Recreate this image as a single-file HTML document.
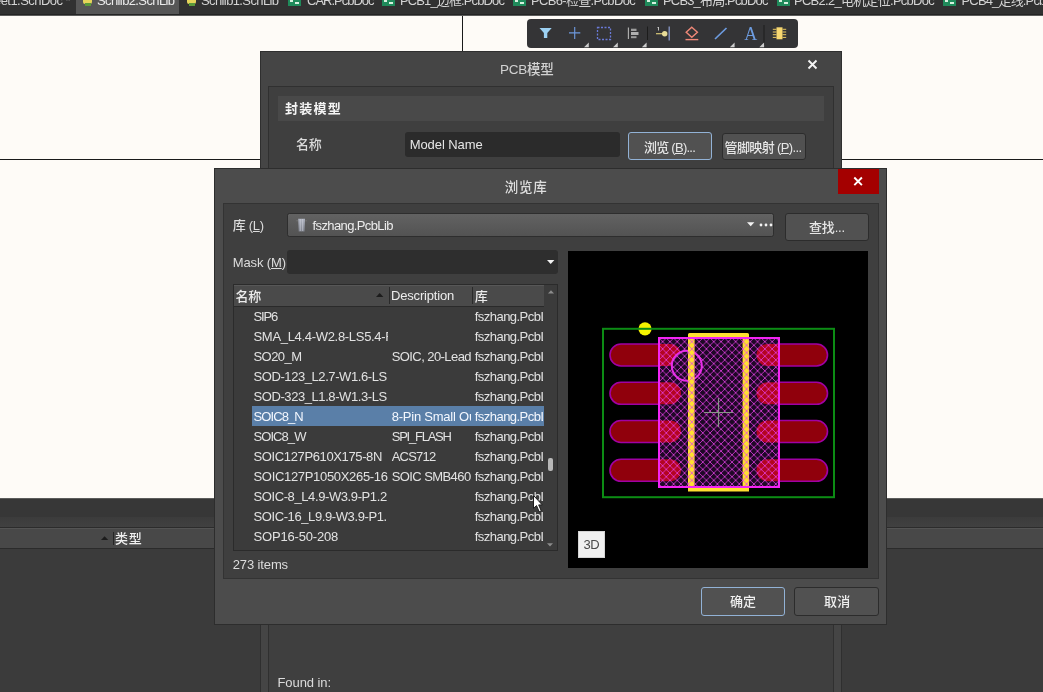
<!DOCTYPE html>
<html><head><meta charset="utf-8">
<style>
*{box-sizing:border-box;margin:0;padding:0}
html,body{width:1043px;height:692px;overflow:hidden;background:#fefbf7}
body{position:relative;font-family:"Liberation Sans","Noto Sans CJK SC",sans-serif;font-size:13px;color:#e0e0e0}
.a{position:absolute}
.t{position:absolute;white-space:nowrap}
.clip{position:absolute;overflow:hidden}
.btn{position:absolute;background:#515151;border:1px solid #2c2c2c;border-radius:3px}
#all{position:absolute;left:0;top:0;width:1043px;height:692px;will-change:transform}
</style></head><body><div id="all">

<div class="a" style="left:462px;top:15px;width:1px;height:37px;background:#1a1a1a"></div>
<div class="a" style="left:0;top:159px;width:260px;height:1px;background:#1a1a1a"></div>
<div class="a" style="left:842px;top:159px;width:201px;height:1px;background:#1a1a1a"></div>

<div class="clip" style="left:0;top:0;width:1043px;height:16px;background:#313131;border-bottom:1px solid #5c5c5b">
<div class="a" style="left:76px;top:0;width:103px;height:14px;background:#565656"></div>
<div class="a" style="left:0;top:14px;width:1043px;height:1px;background:#242424"></div>
<span class="t" style="left:-6px;top:-8.0px;font-size:13px;line-height:17px;color:#d4d4d4;letter-spacing:-0.55px;">eet1.SchDoc *</span>
<svg class="a" style="left:82px;top:-4.500px" width="12" height="12"><rect x="1" y="0" width="9" height="8" rx="2" fill="#e6d45a"/><rect x="3" y="7" width="6" height="3" fill="#5a9a3a"/></svg>
<span class="t" style="left:97px;top:-8.0px;font-size:13px;line-height:17px;color:#ececec;letter-spacing:-0.61px;">Schlib2.SchLib</span>
<svg class="a" style="left:186px;top:-4.500px" width="12" height="12"><rect x="1" y="0" width="9" height="8" rx="2" fill="#e6d45a"/><rect x="3" y="7" width="6" height="3" fill="#5a9a3a"/></svg>
<span class="t" style="left:201px;top:-8.0px;font-size:13px;line-height:17px;color:#d4d4d4;letter-spacing:-0.61px;">Schlib1.SchLib</span>
<svg class="a" style="left:288px;top:-4.500px" width="14" height="12"><rect x="0" y="0" width="13" height="10" fill="#1f8a5a"/><rect x="2" y="3" width="3" height="3" fill="#d8f0e0"/><rect x="7" y="2" width="4" height="2" fill="#d8f0e0"/><rect x="7" y="6" width="4" height="2" fill="#d8f0e0"/></svg>
<span class="t" style="left:307px;top:-8.0px;font-size:13px;line-height:17px;color:#d4d4d4;letter-spacing:-1.01px;">CAR.PcbDoc</span>
<svg class="a" style="left:382px;top:-4.500px" width="14" height="12"><rect x="0" y="0" width="13" height="10" fill="#1f8a5a"/><rect x="2" y="3" width="3" height="3" fill="#d8f0e0"/><rect x="7" y="2" width="4" height="2" fill="#d8f0e0"/><rect x="7" y="6" width="4" height="2" fill="#d8f0e0"/></svg>
<span class="t" style="left:400px;top:-8.0px;font-size:13px;line-height:17px;color:#d4d4d4;letter-spacing:-0.88px;">PCB1_边框.PcbDoc</span>
<svg class="a" style="left:513px;top:-4.500px" width="14" height="12"><rect x="0" y="0" width="13" height="10" fill="#1f8a5a"/><rect x="2" y="3" width="3" height="3" fill="#d8f0e0"/><rect x="7" y="2" width="4" height="2" fill="#d8f0e0"/><rect x="7" y="6" width="4" height="2" fill="#d8f0e0"/></svg>
<span class="t" style="left:531px;top:-8.0px;font-size:13px;line-height:17px;color:#d4d4d4;letter-spacing:-0.67px;">PCB6-检查.PcbDoc</span>
<svg class="a" style="left:645px;top:-4.500px" width="14" height="12"><rect x="0" y="0" width="13" height="10" fill="#1f8a5a"/><rect x="2" y="3" width="3" height="3" fill="#d8f0e0"/><rect x="7" y="2" width="4" height="2" fill="#d8f0e0"/><rect x="7" y="6" width="4" height="2" fill="#d8f0e0"/></svg>
<span class="t" style="left:663px;top:-8.0px;font-size:13px;line-height:17px;color:#d4d4d4;letter-spacing:-0.84px;">PCB3_布局.PcbDoc</span>
<svg class="a" style="left:777px;top:-4.500px" width="14" height="12"><rect x="0" y="0" width="13" height="10" fill="#1f8a5a"/><rect x="2" y="3" width="3" height="3" fill="#d8f0e0"/><rect x="7" y="2" width="4" height="2" fill="#d8f0e0"/><rect x="7" y="6" width="4" height="2" fill="#d8f0e0"/></svg>
<span class="t" style="left:794px;top:-8.0px;font-size:13px;line-height:17px;color:#d4d4d4;letter-spacing:-0.73px;">PCB2.2_电机定位.PcbDoc</span>
<svg class="a" style="left:943px;top:-4.500px" width="14" height="12"><rect x="0" y="0" width="13" height="10" fill="#1f8a5a"/><rect x="2" y="3" width="3" height="3" fill="#d8f0e0"/><rect x="7" y="2" width="4" height="2" fill="#d8f0e0"/><rect x="7" y="6" width="4" height="2" fill="#d8f0e0"/></svg>
<span class="t" style="left:961.5px;top:-8.0px;font-size:13px;line-height:17px;color:#d4d4d4;letter-spacing:-0.84px;">PCB4_走线.PcbDoc</span>
</div>
<div class="a" style="left:527px;top:19px;width:271px;height:29px;background:#343436;border-radius:4px"></div>
<svg class="a" style="left:527px;top:19px" width="271" height="29" viewBox="0 0 271 29">
 <path d="M12.500 9 H24.700 L20.300 14 V19 H16.900 V14 Z" fill="#9cd0f2"/>
 <path d="M47.700 8 V20 M42 13.900 H53.300" stroke="#6d98dc" stroke-width="1.150" fill="none"/>
 <rect x="70.500" y="8.500" width="13" height="12" fill="none" stroke="#6a7ad8" stroke-width="1.300" stroke-dasharray="2 1.500"/>
 <path d="M101.400 8.500 V20" stroke="#b4b4b4" stroke-width="1.100"/><rect x="104" y="9.700" width="5.500" height="2.300" fill="#9c9c9c"/><rect x="104" y="13" width="7.500" height="3" fill="#b0b0b0"/><rect x="104" y="17.200" width="5.500" height="2" fill="#9c9c9c"/>
 <path d="M120.500 7.500 V21" stroke="#1c1c1c" stroke-width="1"/>
 <path d="M129 14.700 H138" stroke="#d8c878" stroke-width="1.200"/><circle cx="137.700" cy="14.800" r="2.700" fill="#e8dc98"/><path d="M142.200 7.500 V21.500" stroke="#8898c8" stroke-width="1.300" fill="none"/><path d="M131.500 8 V11.500 M130.500 9 L131.500 8" stroke="#cfcfcf" stroke-width="0.900" fill="none"/>
 <path d="M164.800 8.200 L170.400 13.200 L164.800 18.200 L159.200 13.200 Z" fill="none" stroke="#f08878" stroke-width="1.400"/><path d="M158.500 20.600 H171.300" stroke="#f08878" stroke-width="1.400"/>
 <path d="M188 20 L199.500 9" stroke="#6d9ce0" stroke-width="1.700"/>
 <path d="M237 6 V26" stroke="#1c1c1c" stroke-width="1"/>
 <rect x="249.500" y="8.300" width="6" height="12" fill="#f8d870"/><path d="M245.800 10.300 H249.500 M245.800 13 H249.500 M245.800 15.700 H249.500 M245.800 18.400 H249.500 M255.500 10.300 H259.200 M255.500 13 H259.200 M255.500 15.700 H259.200 M255.500 18.400 H259.200" stroke="#e8c860" stroke-width="1"/>
 <path d="M57 28.200 H61.800 V23.500 Z M86 28.200 H90.800 V23.500 Z M114.800 28.200 H119.600 V23.500 Z M202.800 28.200 H207.600 V23.500 Z M232.300 28.200 H237.100 V23.500 Z" fill="#cccccc"/>
</svg>

<span class="t" style="left:744.3px;top:22.8px;font-size:18px;line-height:22px;color:#6d9ce0;letter-spacing:-0.32px;font-family:'Liberation Serif',serif;">A</span>
<div class="a" style="left:0;top:498px;width:1043px;height:194px;background:#3b3b3b"></div>
<div class="a" style="left:0;top:498px;width:1043px;height:19px;background:#373737;border-top:1px solid #5c5c5b"></div>
<div class="a" style="left:0;top:517px;width:1043px;height:10px;background:linear-gradient(#3c3c3c,#414141)"></div>
<div class="a" style="left:0;top:527px;width:1043px;height:22px;background:#484848;border-top:1px solid #2c2c2c;border-bottom:1px solid #2b2b2b"></div>
<div class="a" style="left:0;top:528px;width:1043px;height:1px;background:#545454"></div>
<div class="a" style="left:113px;top:532px;width:1px;height:13px;background:#242424"></div>
<svg class="a" style="left:101px;top:536px" width="8" height="4"><path d="M0 4 L3.600 0.200 L7.200 4Z" fill="#1c1c1c"/></svg>

<span class="t" style="left:115px;top:530.3px;font-size:13px;line-height:17px;color:#f0f0f0;font-weight:500;letter-spacing:0.74px;">类型</span>
<div class="a" style="left:260px;top:51px;width:582px;height:641px;background:#454545;border:1px solid #2f2f2f;border-bottom:none"></div>
<div class="a" style="left:268px;top:86px;width:566px;height:606px;background:#3f3f3f;border:1px solid #303030;border-bottom:none"></div>
<svg class="a" style="left:807px;top:59px" width="11" height="11"><path d="M1.500 1.500 L9.500 9.500 M9.500 1.500 L1.500 9.500" stroke="#f4f4f4" stroke-width="1.900" fill="none"/></svg>
<div class="a" style="left:278px;top:96px;width:546px;height:25px;background:#494949"></div>
<div class="a" style="left:405px;top:132px;width:215px;height:25px;background:#2b2b2b;border-radius:3px"></div>
<div class="btn" style="left:628px;top:132px;width:84px;height:28px;border-color:#92b2d6"></div>
<div class="btn" style="left:722px;top:133px;width:84px;height:27px"></div>

<span class="t" style="left:500px;top:60.9px;font-size:13.5px;line-height:17px;color:#d2d2d2;font-weight:500;letter-spacing:-0.25px;">PCB模型</span>
<span class="t" style="left:285px;top:100.0px;font-size:13px;line-height:17px;color:#f4f4f4;font-weight:bold;letter-spacing:1.25px;">封装模型</span>
<span class="t" style="left:296px;top:136.0px;font-size:13px;line-height:17px;color:#dadada;font-weight:500;letter-spacing:-0.31px;">名称</span>
<span class="t" style="left:409.7px;top:135.5px;font-size:13px;line-height:17px;color:#e6e6e6;letter-spacing:-0.07px;">Model Name</span>
<span class="t" style="left:644px;top:138.5px;font-size:13px;line-height:17px;color:#e6e6e6;font-weight:500;letter-spacing:-0.75px;">浏览 (<u>B</u>)...</span>
<span class="t" style="left:724.5px;top:138.5px;font-size:13px;line-height:17px;color:#e6e6e6;font-weight:500;letter-spacing:-0.62px;">管脚映射 (<u>P</u>)...</span>
<span class="t" style="left:277.5px;top:673.5px;font-size:13px;line-height:17px;color:#dcdcdc;letter-spacing:-0.08px;">Found in:</span>
<div class="a" style="left:214px;top:168px;width:673px;height:457px;background:#4c4c4c;border:1px solid #2d2d2d"></div>
<div class="a" style="left:223px;top:203px;width:656px;height:376px;background:#3f3f3f;border:1px solid #333333"></div>
<div class="a" style="left:838px;top:169px;width:41px;height:25px;background:#a40000"></div>
<svg class="a" style="left:853px;top:176px" width="11" height="11"><path d="M1.300 1.500 L8.900 9.100 M8.900 1.500 L1.300 9.100" stroke="#ffffff" stroke-width="1.900" fill="none"/></svg>
<div class="a" style="left:287px;top:213px;width:487px;height:24px;background:linear-gradient(#626262,#535353);border:1px solid #2e2e2e;border-radius:2.500px"></div>
<svg class="a" style="left:296px;top:218px" width="12" height="14"><defs><linearGradient id="lg" x1="0" y1="0" x2="0" y2="1"><stop offset="0" stop-color="#b0b4c0"/><stop offset="1" stop-color="#80848e"/></linearGradient></defs><path d="M2.200 0.800 H9 L8.500 13.400 H2.700 Z" fill="url(#lg)"/><path d="M4.300 1 V13 M6.600 1 V13" stroke="#d8dae2" stroke-width="0.700" opacity="0.700"/><path d="M0.300 2.800 H2 M9.200 2.800 H11" stroke="#8a8a8a" stroke-width="0.800" opacity="0.600"/></svg>
<svg class="a" style="left:747px;top:222px" width="8" height="5"><path d="M0 0.300 H7.400 L3.700 4.300Z" fill="#f2f2f2"/></svg>
<svg class="a" style="left:759px;top:223px" width="14" height="4"><circle cx="2" cy="2" r="1.400" fill="#f2f2f2"/><circle cx="7" cy="2" r="1.400" fill="#f2f2f2"/><circle cx="12" cy="2" r="1.400" fill="#f2f2f2"/></svg>
<div class="btn" style="left:785px;top:213px;width:84px;height:28px"></div>
<div class="a" style="left:287px;top:250px;width:271px;height:24px;background:#2e2e2e;border-radius:3px"></div>
<svg class="a" style="left:547px;top:260px" width="8" height="5"><path d="M0 0 H7.400 L3.700 4Z" fill="#f2f2f2"/></svg>

<span class="t" style="left:504.8px;top:178.9px;font-size:13.5px;line-height:17px;color:#dedede;font-weight:500;letter-spacing:0.67px;">浏览库</span>
<span class="t" style="left:232.8px;top:217.0px;font-size:13px;line-height:17px;color:#dcdcdc;font-weight:500;letter-spacing:-0.30px;">库 (<u>L</u>)</span>
<span class="t" style="left:312.6px;top:217.0px;font-size:13px;line-height:17px;color:#ececec;letter-spacing:-0.62px;">fszhang.PcbLib</span>
<span class="t" style="left:809px;top:219.0px;font-size:13px;line-height:17px;color:#e6e6e6;font-weight:500;letter-spacing:-0.17px;">查找...</span>
<span class="t" style="left:232.7px;top:254.3px;font-size:13px;line-height:17px;color:#dcdcdc;letter-spacing:-0.11px;">Mask (<u>M</u>)</span>
<div class="a" style="left:233px;top:284px;width:325px;height:267px;background:#3b3b3b;border:1px solid #2b2b2b"></div>
<div class="a" style="left:234px;top:285px;width:310px;height:22px;background:#4a4a4a;border-top:1px solid #575757;border-bottom:1px solid #2a2a2a"></div>
<div class="a" style="left:389px;top:287px;width:1px;height:17px;background:#2a2a2a"></div>
<div class="a" style="left:472px;top:287px;width:1px;height:17px;background:#2a2a2a"></div>
<svg class="a" style="left:376px;top:293px" width="8" height="4"><path d="M0 4 L3.700 0.100 L7.400 4Z" fill="#1c1c1c"/></svg>
<svg class="a" style="left:547.500px;top:289.500px" width="7" height="4"><path d="M0 3.500 L3 0.300 L6 3.500Z" fill="#8c8c8c"/></svg>
<svg class="a" style="left:547px;top:543px" width="7" height="4"><path d="M0 0.300 L3 3.500 L6 0.300Z" fill="#8c8c8c"/></svg>
<div class="a" style="left:548px;top:458px;width:5px;height:13px;background:#b8b8b8;border-radius:2px"></div>
<div class="a" style="left:252px;top:406px;width:292px;height:20px;background:#5a7fa8"></div>

<span class="t" style="left:235.5px;top:287.5px;font-size:13px;line-height:17px;color:#ececec;font-weight:500;letter-spacing:-0.31px;">名称</span>
<span class="t" style="left:391px;top:287.4px;font-size:13px;line-height:17px;color:#ececec;letter-spacing:-0.18px;">Description</span>
<span class="t" style="left:474.8px;top:287.5px;font-size:13px;line-height:17px;color:#ececec;font-weight:500;">库</span>
<div class="clip" style="left:252px;top:306px;width:136px;height:244px">
<span class="t" style="left:1.5px;top:1.5px;font-size:13px;line-height:17px;color:#e2e2e2;letter-spacing:-1.17px;">SIP6</span>
<span class="t" style="left:1.5px;top:21.5px;font-size:13px;line-height:17px;color:#e2e2e2;letter-spacing:-0.31px;">SMA_L4.4-W2.8-LS5.4-F</span>
<span class="t" style="left:1.5px;top:41.5px;font-size:13px;line-height:17px;color:#e2e2e2;letter-spacing:-0.55px;">SO20_M</span>
<span class="t" style="left:1.5px;top:61.5px;font-size:13px;line-height:17px;color:#e2e2e2;letter-spacing:-0.42px;">SOD-123_L2.7-W1.6-LS</span>
<span class="t" style="left:1.5px;top:81.5px;font-size:13px;line-height:17px;color:#e2e2e2;letter-spacing:-0.42px;">SOD-323_L1.8-W1.3-LS</span>
<span class="t" style="left:1.5px;top:101.5px;font-size:13px;line-height:17px;color:#f4f8ff;letter-spacing:-0.91px;">SOIC8_N</span>
<span class="t" style="left:1.5px;top:121.5px;font-size:13px;line-height:17px;color:#e2e2e2;letter-spacing:-0.93px;">SOIC8_W</span>
<span class="t" style="left:1.5px;top:141.5px;font-size:13px;line-height:17px;color:#e2e2e2;letter-spacing:-0.37px;">SOIC127P610X175-8N</span>
<span class="t" style="left:1.5px;top:161.5px;font-size:13px;line-height:17px;color:#e2e2e2;letter-spacing:-0.32px;">SOIC127P1050X265-16</span>
<span class="t" style="left:1.5px;top:181.5px;font-size:13px;line-height:17px;color:#e2e2e2;letter-spacing:-0.40px;">SOIC-8_L4.9-W3.9-P1.2</span>
<span class="t" style="left:1.5px;top:201.5px;font-size:13px;line-height:17px;color:#e2e2e2;letter-spacing:-0.40px;">SOIC-16_L9.9-W3.9-P1.</span>
<span class="t" style="left:1.5px;top:221.5px;font-size:13px;line-height:17px;color:#e2e2e2;letter-spacing:-0.18px;">SOP16-50-208</span>
</div>
<div class="clip" style="left:390px;top:306px;width:81px;height:244px">
<span class="t" style="left:1.7px;top:41.5px;font-size:13px;line-height:17px;color:#e2e2e2;letter-spacing:-0.57px;">SOIC, 20-Lead</span>
<span class="t" style="left:1.7px;top:101.5px;font-size:13px;line-height:17px;color:#f4f8ff;letter-spacing:-0.23px;">8-Pin Small Outline</span>
<span class="t" style="left:1.7px;top:121.5px;font-size:13px;line-height:17px;color:#e2e2e2;letter-spacing:-1.23px;">SPI_FLASH</span>
<span class="t" style="left:1.7px;top:141.5px;font-size:13px;line-height:17px;color:#e2e2e2;letter-spacing:-0.80px;">ACS712</span>
<span class="t" style="left:1.7px;top:161.5px;font-size:13px;line-height:17px;color:#e2e2e2;letter-spacing:-0.58px;">SOIC SMB460</span>
</div>
<div class="clip" style="left:473px;top:306px;width:70px;height:244px">
<span class="t" style="left:1.8px;top:1.5px;font-size:13px;line-height:17px;color:#e2e2e2;letter-spacing:-0.54px;">fszhang.PcbLib</span>
<span class="t" style="left:1.8px;top:21.5px;font-size:13px;line-height:17px;color:#e2e2e2;letter-spacing:-0.54px;">fszhang.PcbLib</span>
<span class="t" style="left:1.8px;top:41.5px;font-size:13px;line-height:17px;color:#e2e2e2;letter-spacing:-0.54px;">fszhang.PcbLib</span>
<span class="t" style="left:1.8px;top:61.5px;font-size:13px;line-height:17px;color:#e2e2e2;letter-spacing:-0.54px;">fszhang.PcbLib</span>
<span class="t" style="left:1.8px;top:81.5px;font-size:13px;line-height:17px;color:#e2e2e2;letter-spacing:-0.54px;">fszhang.PcbLib</span>
<span class="t" style="left:1.8px;top:101.5px;font-size:13px;line-height:17px;color:#f4f8ff;letter-spacing:-0.54px;">fszhang.PcbLib</span>
<span class="t" style="left:1.8px;top:121.5px;font-size:13px;line-height:17px;color:#e2e2e2;letter-spacing:-0.54px;">fszhang.PcbLib</span>
<span class="t" style="left:1.8px;top:141.5px;font-size:13px;line-height:17px;color:#e2e2e2;letter-spacing:-0.54px;">fszhang.PcbLib</span>
<span class="t" style="left:1.8px;top:161.5px;font-size:13px;line-height:17px;color:#e2e2e2;letter-spacing:-0.54px;">fszhang.PcbLib</span>
<span class="t" style="left:1.8px;top:181.5px;font-size:13px;line-height:17px;color:#e2e2e2;letter-spacing:-0.54px;">fszhang.PcbLib</span>
<span class="t" style="left:1.8px;top:201.5px;font-size:13px;line-height:17px;color:#e2e2e2;letter-spacing:-0.54px;">fszhang.PcbLib</span>
<span class="t" style="left:1.8px;top:221.5px;font-size:13px;line-height:17px;color:#e2e2e2;letter-spacing:-0.54px;">fszhang.PcbLib</span>
</div>
<span class="t" style="left:232.7px;top:555.5px;font-size:13px;line-height:17px;color:#dcdcdc;letter-spacing:-0.12px;">273 items</span>
<div class="btn" style="left:701px;top:587px;width:84px;height:29px;border-color:#92b2d6"></div>
<div class="btn" style="left:794px;top:587px;width:85px;height:29px"></div>

<span class="t" style="left:730px;top:593.3px;font-size:13px;line-height:17px;color:#f0f0f0;font-weight:500;letter-spacing:-0.01px;">确定</span>
<span class="t" style="left:824px;top:593.3px;font-size:13px;line-height:17px;color:#f0f0f0;font-weight:500;letter-spacing:0.24px;">取消</span>
<div class="a" style="left:568px;top:251px;width:300px;height:317px;background:#000"></div>
<svg class="a" style="left:568px;top:251px" width="300" height="318" viewBox="568 251 300 318">
<defs>
<pattern id="hatch" patternUnits="userSpaceOnUse" width="7.300" height="7.300" patternTransform="translate(659 338)">
<path d="M0 0 L7.300 7.300 M7.300 0 L0 7.300" stroke="#e840e8" stroke-width="0.900" fill="none"/>
</pattern>
<clipPath id="inrect"><rect x="659" y="338" width="120" height="149"/></clipPath>
</defs>
<g fill="#90000c" stroke="#a000a4" stroke-width="1.600"><rect x="610" y="344" width="71" height="22" rx="11"/><rect x="610" y="382.300" width="71" height="22" rx="11"/><rect x="610" y="420.500" width="71" height="22" rx="11"/><rect x="610" y="459.300" width="71" height="22" rx="11"/><rect x="756.500" y="344" width="71" height="22" rx="11"/><rect x="756.500" y="382.300" width="71" height="22" rx="11"/><rect x="756.500" y="420.500" width="71" height="22" rx="11"/><rect x="756.500" y="459.300" width="71" height="22" rx="11"/></g>
<rect x="659" y="338" width="120" height="149" fill="#1e0826"/>
<g fill="#b40420" clip-path="url(#inrect)"><rect x="610" y="344" width="71" height="22" rx="11"/><rect x="610" y="382.300" width="71" height="22" rx="11"/><rect x="610" y="420.500" width="71" height="22" rx="11"/><rect x="610" y="459.300" width="71" height="22" rx="11"/><rect x="756.500" y="344" width="71" height="22" rx="11"/><rect x="756.500" y="382.300" width="71" height="22" rx="11"/><rect x="756.500" y="420.500" width="71" height="22" rx="11"/><rect x="756.500" y="459.300" width="71" height="22" rx="11"/></g>
<circle cx="686.800" cy="365.800" r="15" fill="#1e0826" stroke="#e828e8" stroke-width="2"/>
<path d="M688 491.500 V334.500 Q688 333 689.500 333 H747.500 Q749 333 749 334.500 V491.500 H742.600 V338 H694.600 V487 H742.600 V491.500 Z" fill="#ffe030" fill-rule="evenodd"/>
<rect x="659" y="338" width="120" height="149" fill="url(#hatch)" fill-opacity="0.850"/>
<rect x="659" y="338" width="120" height="149" fill="none" stroke="#f424f4" stroke-width="2"/>
<path d="M718.500 398 V427 M704 412.500 H733" stroke="#869686" stroke-width="1.200"/>
<circle cx="645" cy="328.800" r="6.600" fill="#f4f400"/>
<rect x="603" y="328.800" width="231" height="168.400" fill="none" stroke="#0c8c14" stroke-width="2"/>
</svg>
<div class="a" style="left:578px;top:531px;width:27px;height:27px;background:#f0f0f0;border:1px solid #d4d4d4"></div>

<span class="t" style="left:583.6px;top:536.0px;font-size:13px;line-height:17px;color:#4a4a4a;letter-spacing:-0.51px;">3D</span>
<svg class="a" style="left:532px;top:494px" width="12" height="20" viewBox="-1.500 -1.500 12 20"><path d="M0 0 V12.800 L3 10.100 L5.700 16.300 L7.800 15.400 L5.200 9.400 H8.800 Z" fill="#ffffff" stroke="#1c1c1c" stroke-width="1"/></svg>
</div></body></html>
